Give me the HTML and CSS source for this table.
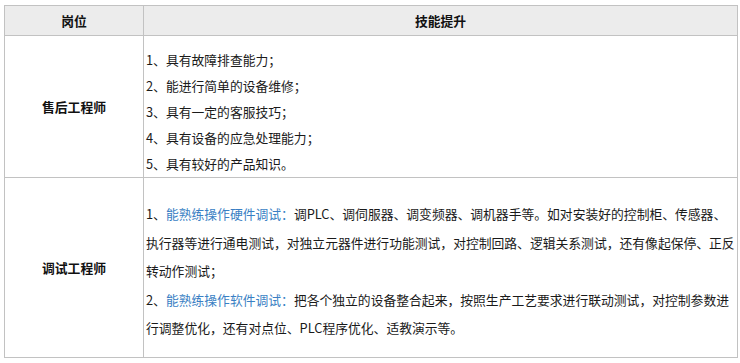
FILE: index.html
```html
<!DOCTYPE html>
<html lang="zh-CN">
<head>
<meta charset="utf-8">
<title>岗位技能提升</title>
<link rel="stylesheet" href="styles.css">
</head>
<body>
<table class="skills">
  <thead>
    <tr>
      <th class="col-role">岗位</th>
      <th class="col-skill">技能提升</th>
    </tr>
  </thead>
  <tbody>
    <tr class="row-sales">
      <td class="role">售后工程师</td>
      <td class="skill">
        <p>1、具有故障排查能力；</p>
        <p>2、能进行简单的设备维修；</p>
        <p>3、具有一定的客服技巧；</p>
        <p>4、具有设备的应急处理能力；</p>
        <p>5、具有较好的产品知识。</p>
      </td>
    </tr>
    <tr class="row-debug">
      <td class="role">调试工程师</td>
      <td class="skill">
        <p>1、<span class="hl">能熟练操作硬件调试：</span>调PLC、调伺服器、调变频器、调机器手等。如对安装好的控制柜、传感器、<br>执行器等进行通电测试，对独立元器件进行功能测试，对控制回路、逻辑关系测试，还有像起保停、正反<br>转动作测试；</p>
        <p>2、<span class="hl">能熟练操作软件调试：</span>把各个独立的设备整合起来，按照生产工艺要求进行联动测试，对控制参数进<br>行调整优化，还有对点位、PLC程序优化、适教演示等。</p>
      </td>
    </tr>
  </tbody>
</table>
</body>
</html>
```

FILE: styles.css
```css
html, body {
  margin: 0;
  padding: 0;
  background: #ffffff;
}

body {
  padding: 5px 2px 0 4px;
  font-family: "Noto Sans CJK SC", "Microsoft YaHei", sans-serif;
  font-size: 12.8px;
  color: #1a1a1a;
}

.skills {
  width: 734px;
  border-collapse: collapse;
  table-layout: fixed;
}

.skills th,
.skills td {
  border: 1px solid #c2c2c2;
  padding: 0;
}

.skills th {
  background: #ececec;
  font-weight: bold;
  height: 28px;
  line-height: 28px;
  padding-top: 1px;
  text-align: center;
  color: #111111;
}

.col-role {
  width: 138px;
}

.role {
  text-align: center;
  vertical-align: middle;
  font-weight: bold;
  color: #111111;
}

.skill {
  vertical-align: top;
  padding-left: 2px !important;
  white-space: nowrap;
}

.skill p {
  margin: 0;
}

.row-sales .skill {
  padding-top: 11px !important;
  height: 130px;
}

.row-sales .skill p {
  line-height: 26px;
}

.row-debug .skill {
  padding-top: 22px !important;
  padding-bottom: 14px !important;
}

.row-debug .skill p {
  line-height: 28.6px;
}

.hl {
  color: #3a7fc4;
}
```
